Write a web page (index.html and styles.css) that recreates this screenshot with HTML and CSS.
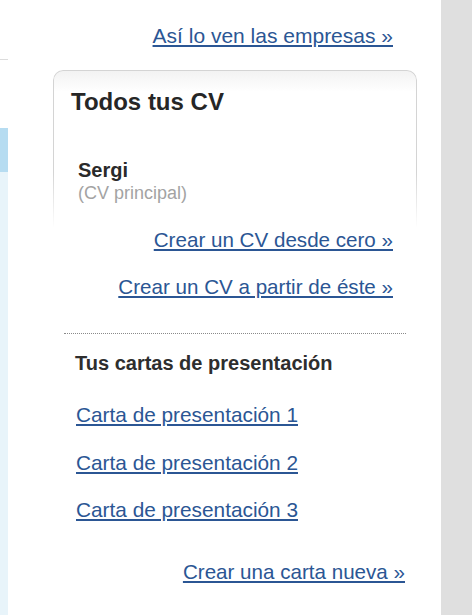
FILE: index.html
```html
<!DOCTYPE html>
<html lang="es">
<head>
<meta charset="utf-8">
<title>Todos tus CV</title>
<link rel="stylesheet" href="styles.css">
</head>
<body>
<div class="page">
  <div class="left-strip">
    <div class="ls-top"></div>
    <div class="ls-gap"></div>
    <div class="ls-active"></div>
    <div class="ls-rest"></div>
  </div>
  <main class="sidebar">
    <div class="link-row top-link"><a href="#">Así lo ven las empresas »</a></div>
    <section class="card">
      <h2 class="card-title">Todos tus CV</h2>
      <div class="cv-entry">
        <div class="cv-name">Sergi</div>
        <div class="cv-note">(CV principal)</div>
      </div>
    </section>
    <div class="link-row"><a href="#">Crear un CV desde cero »</a></div>
    <div class="link-row gap-link"><a href="#">Crear un CV a partir de éste »</a></div>
    <hr class="dotted">
    <h3 class="letters-title">Tus cartas de presentación</h3>
    <ul class="letters">
      <li><a href="#">Carta de presentación 1</a></li>
      <li><a href="#">Carta de presentación 2</a></li>
      <li><a href="#">Carta de presentación 3</a></li>
    </ul>
    <div class="link-row new-letter"><a href="#">Crear una carta nueva »</a></div>
  </main>
  <div class="right-strip"></div>
</div>
</body>
</html>
```

FILE: styles.css
```css
html, body {
  margin: 0;
  padding: 0;
  background: #ffffff;
}

body {
  font-family: "Liberation Sans", Arial, sans-serif;
  color: #2a2a2a;
}

.page {
  display: flex;
  width: 472px;
  height: 615px;
  overflow: hidden;
}

.left-strip {
  width: 8px;
  flex: none;
  display: flex;
  flex-direction: column;
}

.ls-top {
  height: 59px;
  border-bottom: 1px solid #dcdcdc;
}

.ls-gap {
  height: 68px;
}

.ls-active {
  height: 44px;
  background: #b6dcf1;
}

.ls-rest {
  flex: 1;
  background: #e8f4fa;
}

.sidebar {
  flex: 1;
  padding-top: 24px;
  min-width: 0;
}

.right-strip {
  width: 31px;
  flex: none;
  background: #dfdfdf;
}

a {
  color: #2b5694;
  text-decoration: underline;
  text-decoration-thickness: 1.5px;
  text-underline-offset: 2px;
}

.link-row {
  font-size: 20.6px;
  line-height: 24px;
  text-align: right;
  padding-right: 48px;
}

.top-link {
  font-size: 21px;
}

.card {
  position: relative;
  margin: 22px 24px 0 45px;
  padding: 18px 17px 24px 18px;
  border-radius: 10px 10px 0 0;
  background: linear-gradient(to bottom, #f2f2f2 0, #ffffff 22px);
}

.card::before {
  content: "";
  position: absolute;
  inset: 0;
  border: 1px solid #d4d4d4;
  border-bottom: none;
  border-radius: 10px 10px 0 0;
  -webkit-mask-image: linear-gradient(to bottom, #000 0, #000 65%, transparent 100%);
  mask-image: linear-gradient(to bottom, #000 0, #000 65%, transparent 100%);
  pointer-events: none;
}

.card-title {
  margin: 0;
  font-size: 24px;
  line-height: 28px;
  font-weight: bold;
  color: #262626;
}

.cv-entry {
  margin-top: 43px;
  padding-left: 7px;
}

.cv-name {
  font-size: 20px;
  line-height: 22px;
  font-weight: bold;
  color: #2a2a2a;
}

.cv-note {
  margin-top: 1px;
  font-size: 18px;
  line-height: 22px;
  color: #a3a3a3;
}

.gap-link {
  margin-top: 23px;
}

.dotted {
  margin: 34px 35px 0 56px;
  height: 0;
  border: none;
  border-top: 1px dotted #8a8a8a;
}

.letters-title {
  margin: 17px 0 0 67px;
  font-size: 20px;
  line-height: 24px;
  font-weight: bold;
  color: #2e2e2e;
}

.letters {
  list-style: none;
  margin: 28px 0 0 68px;
  padding: 0;
  display: flex;
  flex-direction: column;
  align-items: flex-start;
  gap: 23.5px;
  font-size: 20.8px;
  line-height: 24px;
}

.new-letter {
  margin-top: 38px;
  padding-right: 36px;
}
```
